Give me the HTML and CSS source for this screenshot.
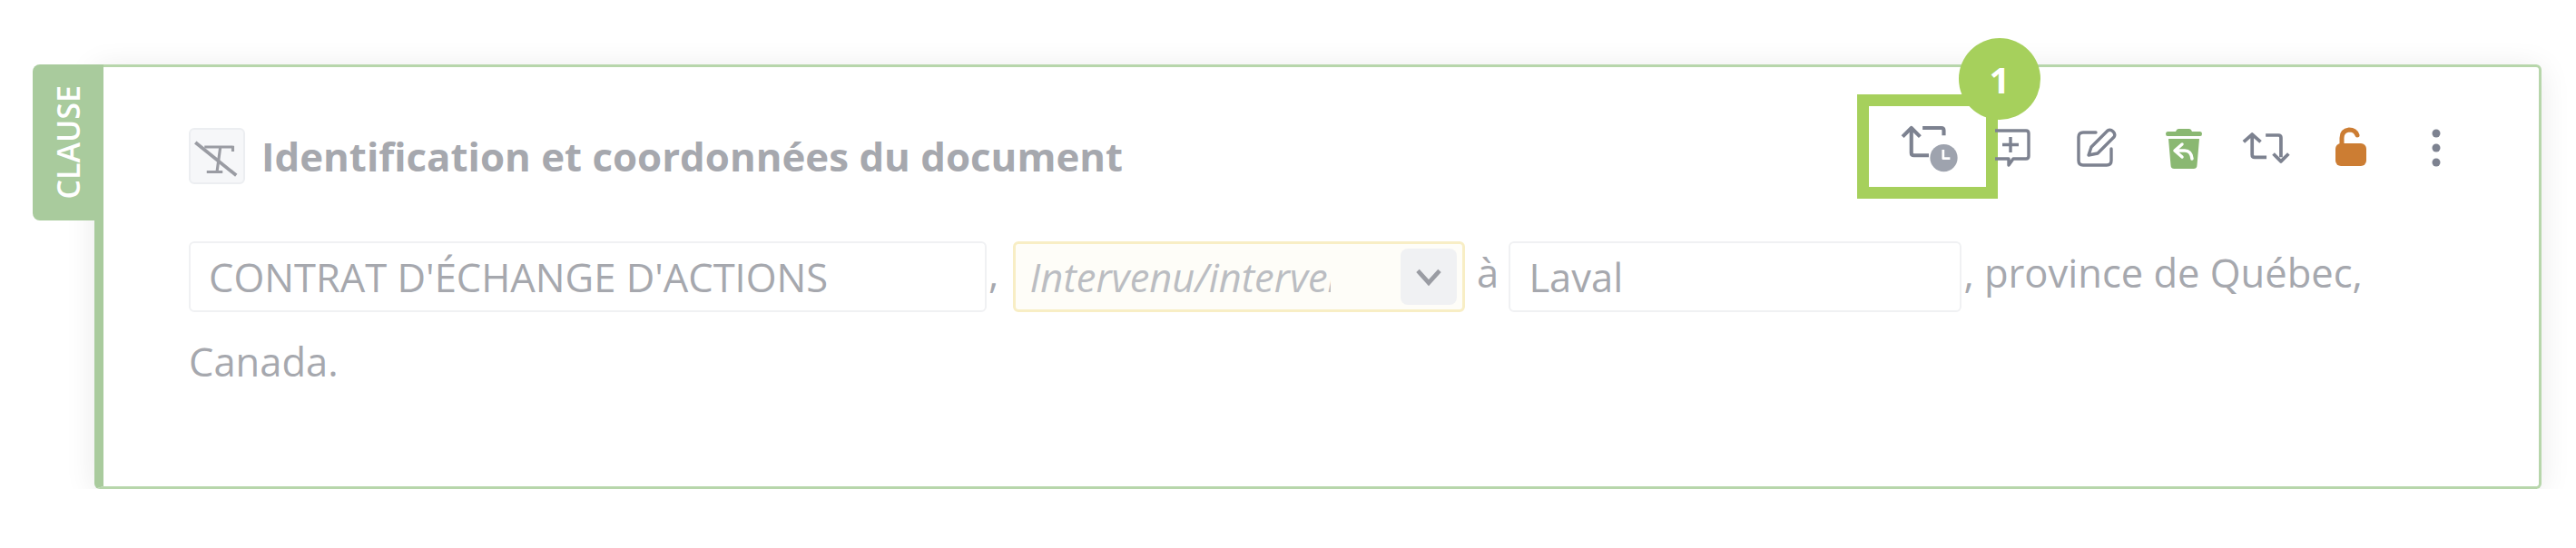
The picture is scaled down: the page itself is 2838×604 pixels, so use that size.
FILE: index.html
```html
<!DOCTYPE html>
<html lang="fr">
<head>
  <meta charset="UTF-8" />
  <title>Clause</title>
  <link rel="stylesheet" href="styles.css">
</head>
<body>
  <section class="clause">
    <div class="clause-tab"><span>CLAUSE</span></div>

    <header class="clause-head">
      <div class="clause-title">
        <span class="title-icon">
          <svg viewBox="0 0 40 40" width="50" height="50" fill="none" stroke="#9a9ca3" stroke-width="2.500">
            <path d="M9 12h25M23 12l-3 22M11 34h14M34 11v5"/>
            <path d="M1 8l36 29" stroke-width="3"/>
          </svg>
        </span>
        <h2>Identification et coordonnées du document</h2>
      </div>

      <div class="clause-tools">
        <span class="tool tool-history">
          <svg viewBox="0 0 48 48" width="66" height="66" fill="none" stroke="#7d8290" stroke-width="3" stroke-linejoin="round">
            <path d="M3 15l7-7 7 7M10 9v19q0 2 2 2h12M19 8h15q2 0 2 2v4"/>
            <circle cx="36" cy="32" r="11" fill="#9ea3ae" stroke="none"/>
            <path d="M35.500 25.500v7h5.500" stroke="#fff" stroke-width="2"/>
          </svg>
          <span class="tour-frame"></span>
          <span class="tour-badge">1</span>
        </span>
        <span class="tool tool-comment">
          <svg viewBox="0 0 48 48" width="48" height="48" fill="none" stroke="#7d8290" stroke-width="3.400" stroke-linejoin="round">
            <path d="M7 5h34q3 0 3 3v25q0 3-3 3H27l-5 7v-7H7"/>
            <path d="M24 12v17M15 20.500h18"/>
          </svg>
        </span>
        <span class="tool tool-edit">
          <svg viewBox="0 0 48 48" width="48" height="48" fill="none" stroke="#7d8290" stroke-width="3.400" stroke-linecap="round" stroke-linejoin="round">
            <path d="M24 7H10q-5 0-5 5v26q0 5 5 5h26q5 0 5-5V25"/>
            <path d="M16 32l3-9L37 5q3-2 6 1t1 6L26 30z"/>
          </svg>
        </span>
        <span class="tool">
          <svg viewBox="0 0 48 48" width="48" height="48">
            <path fill="#8ab872" d="M18 3h12q2 0 3 3h9q2 0 2 2.500T42 11H6q-2 0-2-2.500T6 6h9q1-3 3-3zM7 14h34l-2.500 29q0 4-4 4h-21q-4 0-4-4z"/>
            <path fill="none" stroke="#fff" stroke-width="3.500" stroke-linecap="round" stroke-linejoin="round" d="M22 20l-8 7 8 7M15 27h10q7 0 8 9"/>
          </svg>
        </span>
        <span class="tool">
          <svg viewBox="0 0 60 48" width="56" height="48" fill="none" stroke="#7d8290" stroke-width="4" stroke-linejoin="round">
            <path d="M2 17l10-9 10 9M12 9v23q0 3 3 3h14M28 9h15q3 0 3 3v23M37 31l9 9 9-9"/>
          </svg>
        </span>
        <span class="tool tool-lock">
          <svg viewBox="0 0 48 48" width="48" height="48">
            <path fill="none" stroke="#cc7d33" stroke-width="5" stroke-linecap="round" d="M14 20v-7q0-8 8-9 7 0 9 6"/>
            <rect x="7" y="19" width="34" height="25" rx="6" fill="#cc7d33"/>
          </svg>
        </span>
        <span class="tool">
          <svg viewBox="0 0 48 48" width="48" height="48" fill="#7d8290">
            <circle cx="24" cy="8" r="4.500"/><circle cx="24" cy="24" r="4.500"/><circle cx="24" cy="40" r="4.500"/>
          </svg>
        </span>
      </div>
    </header>

    <p class="clause-body">
      <span class="field field-title">CONTRAT D'ÉCHANGE D'ACTIONS</span><span class="sep">,</span>
      <span class="field field-select">
        <span class="select-text">Intervenu/intervenue</span>
        <span class="select-btn">
          <svg viewBox="0 0 24 24" width="32" height="32" fill="none" stroke="#9a9ca3" stroke-width="3.500"><path d="M3 7l9 10 9-10"/></svg>
        </span>
      </span>
      <span class="sep">à</span>
      <span class="field field-city">Laval</span><span class="sep">, province de Québec,</span> Canada.
    </p>
  </section>
</body>
</html>
```

FILE: styles.css
```css
body {
  margin: 0;
  background: #fff;
  font-family: "Open Sans", sans-serif;
  color: #a6a8ae;
  overflow: hidden;
}

.clause {
  position: relative;
  box-sizing: border-box;
  width: 2696px;
  height: 468px;
  margin: 71px 0 0 104px;
  padding: 62px 67px 0 94px;
  background: #fff;
  border: 3px solid #b7d6ab;
  border-left: 10px solid #a9cb9d;
  border-radius: 6px;
  box-shadow: 0 4px 34px rgba(0, 0, 0, 0.09);
}

.clause-tab {
  position: absolute;
  top: -3px;
  left: -78px;
  width: 78px;
  height: 172px;
  display: flex;
  align-items: center;
  justify-content: center;
  background: #a9cb9d;
  border-radius: 8px 0 0 8px;
  color: #fff;
  font-size: 34px;
  font-weight: 600;
}

.clause-tab span {
  writing-mode: vertical-rl;
  transform: rotate(180deg);
}

.clause-head {
  display: flex;
  justify-content: space-between;
  align-items: flex-start;
}

.clause-title {
  display: flex;
  align-items: center;
  gap: 18px;
  margin-top: 5px;
}

.title-icon {
  box-sizing: border-box;
  width: 62px;
  height: 62px;
  display: flex;
  align-items: center;
  justify-content: center;
  background: #f6f7f9;
  border: 2px solid #eceef1;
  border-radius: 6px;
}

h2 {
  margin: 0;
  font-size: 43.800px;
  font-weight: 700;
  color: #a6a8ae;
}

.clause-tools {
  display: flex;
  align-items: center;
  margin-top: 3px;
}

.tool {
  position: relative;
  width: 92px;
  height: 48px;
  display: flex;
  align-items: center;
  justify-content: center;
}

.tool-history { margin-right: -2px; }

.tool-comment { margin-right: 2px; }

.tool-edit { margin-right: 5px; }

.tool-lock { margin-right: 2px; }

.tour-frame {
  position: absolute;
  top: -35px;
  left: -33px;
  width: 155px;
  height: 115px;
  box-sizing: border-box;
  border: 13px solid #a6d05c;
}

.tour-badge {
  position: absolute;
  top: -97px;
  left: 79px;
  width: 90px;
  height: 90px;
  display: flex;
  align-items: center;
  justify-content: center;
  background: #a6d05c;
  border-radius: 50%;
  color: #fff;
  font-size: 40px;
  font-weight: 700;
}

.clause-body {
  margin: 49px 0 0;
  font-size: 43.500px;
  line-height: 98px;
}

.field {
  box-sizing: border-box;
  display: inline-flex;
  align-items: center;
  height: 78px;
  vertical-align: middle;
  background: #fff;
  border: 2px solid #f0f1f3;
  border-radius: 6px;
  padding: 0 20px;
  line-height: 1;
}

.field-title { width: 879px; }

.field-city { width: 499px; }

.field-select {
  width: 498px;
  margin-left: 4px;
  padding: 0 6px 0 16px;
  background: #fefdf8;
  border: 3px solid #f8eec5;
  justify-content: space-between;
}

.select-text {
  width: 331px;
  overflow: hidden;
  white-space: nowrap;
  font-style: italic;
  color: #bbbdc2;
}

.select-btn {
  width: 62px;
  height: 62px;
  display: flex;
  align-items: center;
  justify-content: center;
  background: #f0f1f3;
  border-radius: 8px;
}

.sep { margin-left: 2px; }
```
